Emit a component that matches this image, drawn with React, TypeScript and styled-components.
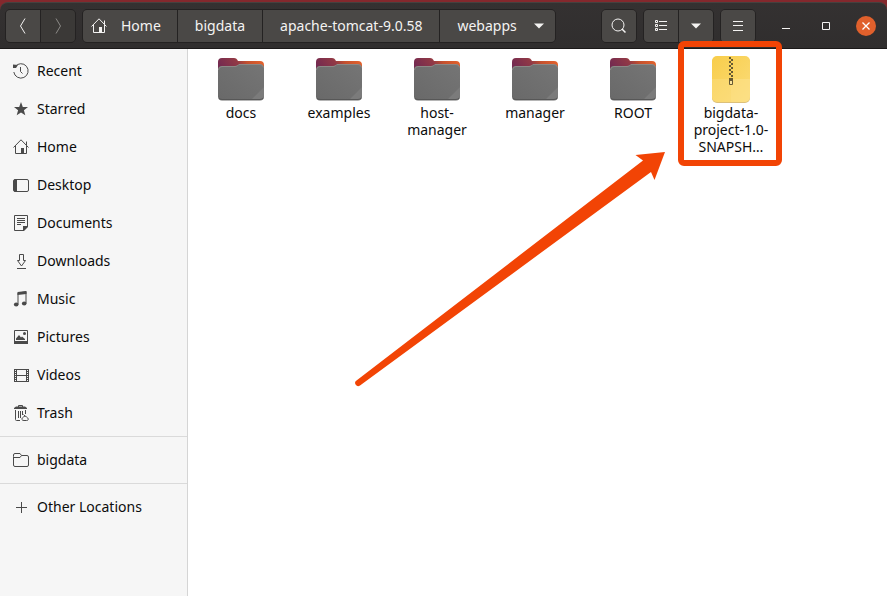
import React from 'react';
import styled, { createGlobalStyle, css } from 'styled-components';

const ACCENT = '#f24405';

const GlobalStyle = createGlobalStyle`
  * { box-sizing: border-box; }
  body { margin: 0; background: #ffffff; }
  button { font: inherit; color: inherit; margin: 0; padding: 0; border: 0; background: none; }
  svg { display: block; flex: none; }
`;

const Window = styled.div`
  min-height: 100vh;
  display: flex;
  flex-direction: column;
  font-family: 'Noto Sans', 'Open Sans', sans-serif;
  font-size: 14px;
  line-height: 17px;
  color: #0c0c0c;
`;

const Backdrop = styled.div`
  background: #84282d;
  padding-top: 2px;
`;

const HeaderBar = styled.header`
  display: flex;
  align-items: center;
  gap: 6px;
  height: 47px;
  padding: 0 11px 0 5px;
  color: #f4f3f2;
  background: linear-gradient(#343131, #302e2e);
  border-top: 1px solid #45413f;
  border-bottom: 1px solid #1b1919;
  border-radius: 8px 8px 0 0;
`;

const ButtonGroup = styled.div`
  display: flex;
  height: 34px;
  border: 1px solid #242222;
  border-radius: 5px;
  overflow: hidden;
  background: #242222;
  gap: 1px;
`;

const headerButton = css`
  display: flex;
  align-items: center;
  justify-content: center;
  background: #4a4846;
`;

const IconButton = styled.button<{ $dim?: boolean }>`
  ${headerButton}
  width: 34px;
  ${(p) => p.$dim && 'background: #3b3937; color: #8c8a88;'}
`;

const PathButton = styled.button<{ $icon?: boolean }>`
  ${headerButton}
  gap: 14px;
  padding: ${(p) => (p.$icon ? '0 16px 0 8px' : '0 17px')};
`;

const PathCurrent = styled(PathButton)`
  gap: 16px;
  padding: 0 10px 0 17px;
`;

const Spacer = styled.div`
  flex: 1;
`;

const WindowControls = styled.div`
  display: flex;
  align-items: center;
  gap: 20px;
  margin-left: 14px;
`;

const ControlButton = styled.button<{ $close?: boolean }>`
  display: flex;
  align-items: center;
  justify-content: center;
  width: 20px;
  height: 20px;
  border-radius: 50%;
  ${(p) => p.$close && 'background: #e0602c;'}
`;

const Body = styled.div`
  flex: 1;
  display: flex;
`;

const Sidebar = styled.nav`
  flex: none;
  width: 188px;
  padding-top: 3px;
  background: #f6f6f6;
  border-right: 1px solid #d5d5d5;
`;

const PlaceList = styled.ul`
  list-style: none;
  margin: 0;
  padding: 0;

  & + & {
    margin-top: 4px;
    padding-top: 4px;
    border-top: 1px solid #dadada;
  }
`;

const PlaceLink = styled.a`
  display: flex;
  align-items: center;
  gap: 8px;
  height: 38px;
  padding-left: 13px;
  line-height: 18px;
  color: inherit;
  text-decoration: none;

  svg { color: #4a4a4a; }
`;

const FileArea = styled.main`
  position: relative;
  flex: 1;
  min-width: 0;
  display: grid;
  grid-template-columns: repeat(auto-fill, 98px);
  align-content: start;
  padding: 6px 4px;
`;

const FileItem = styled.button`
  position: relative;
  display: flex;
  flex-direction: column;
  align-items: center;
  justify-content: flex-start;
  gap: 1px;
`;

const FileName = styled.span`
  width: 86px;
  text-align: center;
`;

const Callout = styled.span`
  position: absolute;
  top: -14px;
  left: -4px;
  width: 104px;
  height: 125px;
  border: 6px solid ${ACCENT};
  border-radius: 6px;
  pointer-events: none;
`;

const Arrow = styled.svg`
  position: absolute;
  top: 102px;
  left: 167px;
  pointer-events: none;
`;

const Glyph = ({ children }: { children: React.ReactNode }) => (
  <svg width="16" height="16" viewBox="0 0 16 16" fill="none" stroke="currentColor" aria-hidden="true">
    {children}
  </svg>
);

const HomeIcon = () => (
  <Glyph>
    <path d="M.5 8.500 8 .8 15.500 8.500M2.500 7v7.500h11V7M13.500 2.500v4" />
    <path d="M8 9h3v6H8z" fill="currentColor" stroke="none" />
  </Glyph>
);

const RecentIcon = () => (
  <Glyph>
    <path d="M2 3.800A7.200 7.200 0 1 1 .8 9M7.500 4v4.500l2 2" />
    <path d="M0 1.500 5 2 3 5 0 5z" fill="currentColor" stroke="none" />
  </Glyph>
);

const StarIcon = () => (
  <Glyph>
    <path d="m8 1 1.800 4.900 5.200.2-4.100 3.200 1.400 5L8 11.400l-4.300 2.900 1.400-5L1 6.100l5.200-.2z" fill="currentColor" stroke="none" />
  </Glyph>
);

const DesktopIcon = () => (
  <Glyph>
    <rect x=".5" y="2.500" width="15" height="12" rx="1.500" />
    <path d="M1 2.500h3v12H1z" fill="currentColor" stroke="none" />
  </Glyph>
);

const DocumentIcon = () => (
  <Glyph>
    <path d="M10 15.500H1.500V.5h13V11M4 3.500h8M4 5.500h8M4 7.500h8M4 9.500h4" />
    <path d="M15 11v1l-4 4h-1v-5z" fill="currentColor" stroke="none" />
  </Glyph>
);

const DownloadIcon = () => (
  <Glyph>
    <path d="M6.500 1.500h4v6h2L8.500 13l-4-5.500h2zM4 15.500h9" />
  </Glyph>
);

const MusicIcon = () => (
  <Glyph>
    <path d="M5 13.500V2l8-1.200V12.500" />
    <path d="M4.500 1 13.500 0v3L4.500 4z" fill="currentColor" stroke="none" />
    <ellipse cx="3.200" cy="13.500" rx="2.300" ry="1.900" fill="currentColor" stroke="none" />
    <ellipse cx="11.200" cy="12.500" rx="2.300" ry="1.900" fill="currentColor" stroke="none" />
  </Glyph>
);

const PictureIcon = () => (
  <Glyph>
    <path d="M1.500 1.500h13v12h-13z" />
    <path d="M1 12h14v3H1zM3 11V9.500L6 6l2 2.500L9 7.500l3 2.500v1z" fill="currentColor" stroke="none" />
    <circle cx="11.500" cy="4.500" r="1.500" fill="currentColor" stroke="none" />
  </Glyph>
);

const VideoIcon = () => (
  <Glyph>
    <path d="M3.500 2v13M13.500 2v13M3 2.500h11M3 8.500h11M3 14.500h11" />
    <path d="M1.500 2v13M15.500 2v13" />
    <path d="M2.500 2v13M14.500 2v13" strokeDasharray="1 1" />
  </Glyph>
);

const TrashIcon = () => (
  <Glyph>
    <path d="M2.500 5v9.500a1 1 0 0 0 1 1H7M12.500 5v4M5.500 6v7M7.500 6v7M9.500 6v4M5.500 2V.5h4V2" />
    <path d="M1 4V3l2-1.500h9L14 3v1z" fill="currentColor" stroke="none" />
    <path d="m10.500 9.500 1.500 1.500m0 0c-4 2-4 4.500-1 4.500h2.500c3 0 2-3-1.500-4.500z" />
  </Glyph>
);

const FolderOutlineIcon = () => (
  <Glyph>
    <path d="M.5 4.500V3A1.500 1.500 0 0 1 2 1.500h5L8.500 3.500H14A1.500 1.500 0 0 1 15.500 5v8a1.500 1.500 0 0 1-1.500 1.500H2A1.500 1.500 0 0 1 .5 13zM.5 5.500H7l1.500-2" />
  </Glyph>
);

const PlusIcon = () => (
  <Glyph>
    <path d="M8.500 3v11M3 8.500h11" />
  </Glyph>
);

const BackIcon = () => (
  <Glyph>
    <path d="M10 .5 5.500 8l4.500 7.500" />
  </Glyph>
);

const ForwardIcon = () => (
  <Glyph>
    <path d="M6 .5 10.500 8 6 15.500" />
  </Glyph>
);

const CaretIcon = () => (
  <svg width="12" height="6" viewBox="0 0 12 6" fill="currentColor" aria-hidden="true">
    <path d="M1 .5h10L6 5.500z" />
  </svg>
);

const SearchIcon = () => (
  <Glyph>
    <circle cx="7" cy="7" r="6" />
    <path d="m11 11 3.500 3.500" strokeWidth="1.500" />
  </Glyph>
);

const ListIcon = () => (
  <Glyph>
    <path d="M2.500 2.500h2v2h-2zM2.500 6.500h2v2h-2zM2.500 10.500h2v2h-2zM6 3.500h8M6 7.500h8M6 11.500h8" />
  </Glyph>
);

const MenuIcon = () => (
  <Glyph>
    <path d="M3 3.500h10M3 7.500h10M3 12.500h10" />
  </Glyph>
);

const MinimizeIcon = () => (
  <Glyph>
    <path d="M4 10.500h8" />
  </Glyph>
);

const MaximizeIcon = () => (
  <Glyph>
    <path d="M4.500 4.500h7v7h-7z" />
  </Glyph>
);

const CloseIcon = () => (
  <Glyph>
    <path d="m4.500 4.500 7 7m0-7-7 7" stroke="#fff" strokeWidth="1.300" />
  </Glyph>
);

const FolderIcon = () => (
  <svg width="48" height="48" viewBox="0 0 48 48" aria-hidden="true">
    <defs>
      <linearGradient id="folder-back" x1="0" y1="0.300" x2="1" y2="0">
        <stop offset="0" stopColor="#742a50" />
        <stop offset=".4" stopColor="#913946" />
        <stop offset=".6" stopColor="#c4512f" />
        <stop offset="1" stopColor="#ea662c" />
      </linearGradient>
      <linearGradient id="folder-front" x1="0" y1="1" x2="1" y2="0">
        <stop offset="0" stopColor="#696969" />
        <stop offset="1" stopColor="#757575" />
      </linearGradient>
    </defs>
    <path d="M1 7a4 4 0 0 1 4-4h12c2 0 3 1 4 3h22a4 4 0 0 1 4 4v12H1z" fill="url(#folder-back)" />
    <path d="M1 15a4 4 0 0 1 4-4h12c2 0 3-.5 4-1l1-.5h21a4 4 0 0 1 4 4v28a4 4 0 0 1-4 4H5a4 4 0 0 1-4-4z" fill="url(#folder-front)" />
    <path d="M1.500 15A3.500 3.500 0 0 1 5 11.500h13c2 0 2.500-1 3.500-1.500L22 9.500h21a3.500 3.500 0 0 1 3.500 3" fill="none" stroke="#8c8986" />
    <path d="M47 32v9a4 4 0 0 1-4 4h-9z" fill="#7b7b7b" />
    <path d="M2 43a4 4 0 0 0 3 1.500h38a4 4 0 0 0 3-1.500" fill="none" stroke="#575757" />
  </svg>
);

const ArchiveIcon = () => (
  <svg width="48" height="48" viewBox="0 0 48 48" aria-hidden="true">
    <defs>
      <linearGradient id="archive-fill" x1="0" y1="0" x2="1" y2="1">
        <stop offset="0" stopColor="#f8cd4a" />
        <stop offset="1" stopColor="#fbdc79" />
      </linearGradient>
    </defs>
    <rect x="5" y="2" width="38" height="46" rx="5" fill="#dcc07a" />
    <rect x="5" y="1" width="38" height="46" rx="5" fill="url(#archive-fill)" />
    <path d="M24 24h19v18a5 5 0 0 1-5 5H24z" fill="#fde492" opacity=".5" />
    <path d="M5 24h19v23H10a5 5 0 0 1-5-5z" fill="#fce08a" opacity=".4" />
    <path d="M23 2v20" stroke="#665a34" strokeWidth="2" strokeDasharray="2 2" />
    <path d="M25 4v18" stroke="#665a34" strokeWidth="2" strokeDasharray="2 2" />
    <path d="M22.500 23.500h3v6h-3z" fill="#fbe39a" stroke="#665a34" />
    <path d="M22 23h4v3h-4z" fill="#665a34" />
  </svg>
);

const places = [
  [
    { name: 'Recent', Icon: RecentIcon },
    { name: 'Starred', Icon: StarIcon },
    { name: 'Home', Icon: HomeIcon },
    { name: 'Desktop', Icon: DesktopIcon },
    { name: 'Documents', Icon: DocumentIcon },
    { name: 'Downloads', Icon: DownloadIcon },
    { name: 'Music', Icon: MusicIcon },
    { name: 'Pictures', Icon: PictureIcon },
    { name: 'Videos', Icon: VideoIcon },
    { name: 'Trash', Icon: TrashIcon },
  ],
  [{ name: 'bigdata', Icon: FolderOutlineIcon }],
  [{ name: 'Other Locations', Icon: PlusIcon }],
];

const folders = ['docs', 'examples', 'host-manager', 'manager', 'ROOT'];

export default function App() {
  return (
    <Window>
      <GlobalStyle />
      <Backdrop>
        <HeaderBar>
          <ButtonGroup>
            <IconButton aria-label="Back"><BackIcon /></IconButton>
            <IconButton aria-label="Forward" $dim><ForwardIcon /></IconButton>
          </ButtonGroup>
          <ButtonGroup>
            <PathButton $icon><HomeIcon />Home</PathButton>
            <PathButton>bigdata</PathButton>
            <PathButton>apache-tomcat-9.0.58</PathButton>
            <PathCurrent>webapps<CaretIcon /></PathCurrent>
          </ButtonGroup>
          <Spacer />
          <ButtonGroup>
            <IconButton aria-label="Search"><SearchIcon /></IconButton>
          </ButtonGroup>
          <ButtonGroup>
            <IconButton aria-label="List view"><ListIcon /></IconButton>
            <IconButton aria-label="View options"><CaretIcon /></IconButton>
          </ButtonGroup>
          <ButtonGroup>
            <IconButton aria-label="Menu"><MenuIcon /></IconButton>
          </ButtonGroup>
          <WindowControls>
            <ControlButton aria-label="Minimize"><MinimizeIcon /></ControlButton>
            <ControlButton aria-label="Maximize"><MaximizeIcon /></ControlButton>
            <ControlButton aria-label="Close" $close><CloseIcon /></ControlButton>
          </WindowControls>
        </HeaderBar>
      </Backdrop>
      <Body>
        <Sidebar aria-label="Places">
          {places.map((group) => (
            <PlaceList key={group[0].name}>
              {group.map(({ name, Icon }) => (
                <li key={name}>
                  <PlaceLink href="#"><Icon />{name}</PlaceLink>
                </li>
              ))}
            </PlaceList>
          ))}
        </Sidebar>
        <FileArea>
          {folders.map((name) => (
            <FileItem key={name}>
              <FolderIcon />
              <FileName>{name}</FileName>
            </FileItem>
          ))}
          <FileItem>
            <ArchiveIcon />
            <FileName>bigdata-project-1.0-SNAPSH…</FileName>
            <Callout />
          </FileItem>
          <Arrow width="312" height="236" viewBox="0 0 312 236" aria-hidden="true">
            <path d="M310 1 280.500 4 288 9.500 1.500 229.500a3 3 0 0 0 3.500 5L296 21l3.500 8z" fill={ACCENT} />
          </Arrow>
        </FileArea>
      </Body>
    </Window>
  );
}
